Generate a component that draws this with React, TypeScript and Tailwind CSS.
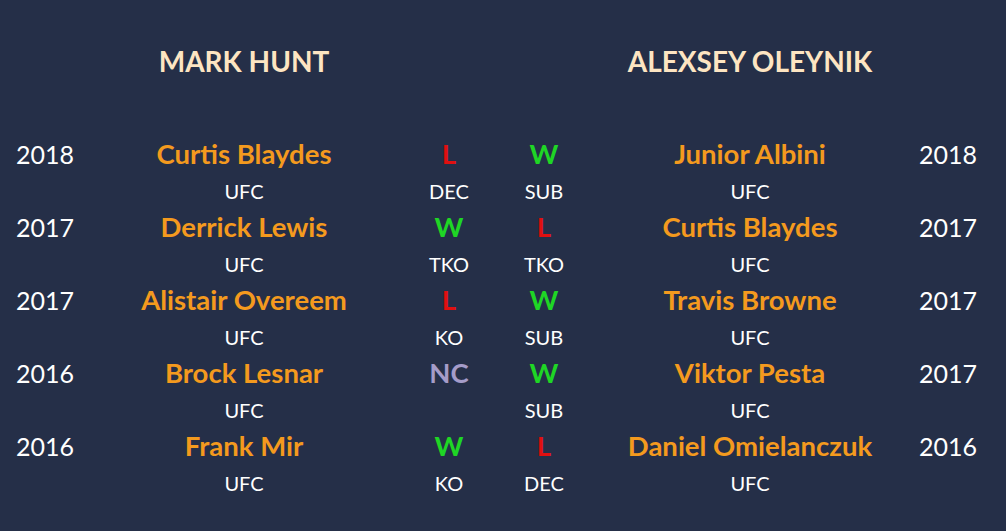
import React from 'react';

type Fight = {
  year: string;
  name: string;
  result: string;
  method: string;
  org: string;
};

const left: Fight[] = [
  { year: '2018', name: 'Curtis Blaydes', result: 'L', method: 'DEC', org: 'UFC' },
  { year: '2017', name: 'Derrick Lewis', result: 'W', method: 'TKO', org: 'UFC' },
  { year: '2017', name: 'Alistair Overeem', result: 'L', method: 'KO', org: 'UFC' },
  { year: '2016', name: 'Brock Lesnar', result: 'NC', method: '', org: 'UFC' },
  { year: '2016', name: 'Frank Mir', result: 'W', method: 'KO', org: 'UFC' },
];

const right: Fight[] = [
  { year: '2018', name: 'Junior Albini', result: 'W', method: 'SUB', org: 'UFC' },
  { year: '2017', name: 'Curtis Blaydes', result: 'L', method: 'TKO', org: 'UFC' },
  { year: '2017', name: 'Travis Browne', result: 'W', method: 'SUB', org: 'UFC' },
  { year: '2017', name: 'Viktor Pesta', result: 'W', method: 'SUB', org: 'UFC' },
  { year: '2016', name: 'Daniel Omielanczuk', result: 'L', method: 'DEC', org: 'UFC' },
];

const resultColor = (r: string) =>
  r === 'W' ? 'text-[#1fd625]' : r === 'L' ? 'text-[#e01010]' : 'text-[#a59cc9]';

const App = () => {
  return (
    <div
      className="w-[1006px] h-[531px] bg-[#252f48] text-white overflow-hidden"
      style={{ fontFamily: 'Lato, "Open Sans", sans-serif' }}
    >
      <div className="grid grid-cols-[90px_308px_102px_88px_324px_72px] text-center">
        {/* Header */}
        <div className="h-[136px]" />
        <div className="pt-[40px] text-[28px] font-bold text-[#fde5c2] leading-[42px]">MARK HUNT</div>
        <div />
        <div />
        <div className="pt-[40px] text-[28px] font-bold text-[#fde5c2] leading-[42px]">ALEXSEY OLEYNIK</div>
        <div />

        {left.map((l, i) => {
          const r = right[i];
          return (
            <React.Fragment key={i}>
              <div className="h-[36.5px] leading-[36.5px] text-[25px]">{l.year}</div>
              <div className="h-[36.5px] leading-[36.5px] text-[27.5px] font-bold text-[#f49a1e]">{l.name}</div>
              <div className={`h-[36.5px] leading-[36.5px] text-[27.5px] font-bold ${resultColor(l.result)}`}>{l.result}</div>
              <div className={`h-[36.5px] leading-[36.5px] text-[27.5px] font-bold ${resultColor(r.result)}`}>{r.result}</div>
              <div className="h-[36.5px] leading-[36.5px] text-[27.5px] font-bold text-[#f49a1e]">{r.name}</div>
              <div className="h-[36.5px] leading-[36.5px] text-[25px]">{r.year}</div>

              <div className="h-[36.5px]" />
              <div className="h-[36.5px] leading-[36.5px] text-[20px]">{l.org}</div>
              <div className="h-[36.5px] leading-[36.5px] text-[20px]">{l.method}</div>
              <div className="h-[36.5px] leading-[36.5px] text-[20px]">{r.method}</div>
              <div className="h-[36.5px] leading-[36.5px] text-[20px]">{r.org}</div>
              <div className="h-[36.5px]" />
            </React.Fragment>
          );
        })}
      </div>
    </div>
  );
};

export default App;
